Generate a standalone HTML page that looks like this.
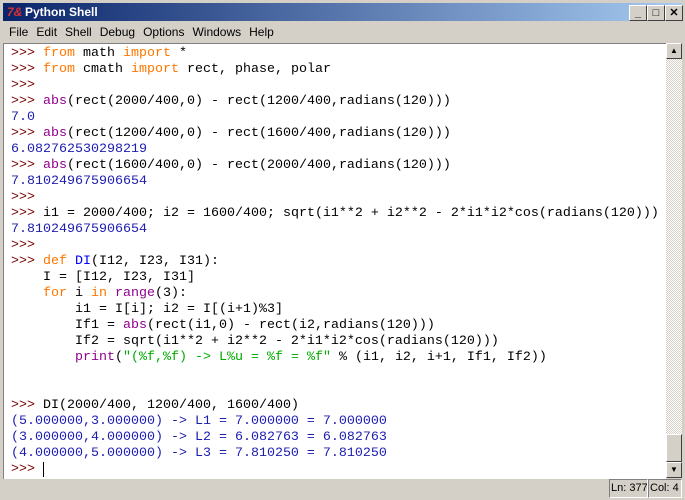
<!DOCTYPE html>
<html><head><style>
body{margin:0;width:685px;height:500px;overflow:hidden;background:#d4d0c8;font-family:"Liberation Sans",sans-serif;position:relative}
.title{position:absolute;left:3px;top:3px;width:679px;height:18px;background:linear-gradient(90deg,#0a246a,#a6caf0);color:#fff;font-weight:bold;font-size:12px;line-height:18px}
.title span.t{position:absolute;left:22px}
.logo{position:absolute;left:4px;top:0;color:#e03030;font-style:italic;font-size:12px}
.btn{position:absolute;top:2px;width:16px;height:14px;background:#d4d0c8;border:1px solid;border-color:#fff #404040 #404040 #fff;color:#000;font-size:11px;line-height:14px;text-align:center}
.menu{position:absolute;left:3px;top:22px;height:20px;font-size:12px;line-height:20px;white-space:nowrap}
.menu span{margin:0 2px 0 6px}
.text{position:absolute;left:3px;top:43px;width:662px;height:435px;background:#fff;border-left:1px solid #808080;border-top:1px solid #808080}
pre{margin:0;position:absolute;left:7px;top:2px;font-family:"Liberation Mono",monospace;font-size:13.33px;line-height:16px;color:#000}
.p{color:#770000}.k{color:#ff7700}.b{color:#900090}.o{color:#1c1cb0}.d{color:#0000ff}.s{color:#00aa00}
.sb{position:absolute;left:666px;top:43px;width:16px;height:435px;background:repeating-conic-gradient(#d4d0c8 0 25%,#fff 0 50%) 0 0/2px 2px}
.sbt{position:absolute;left:666px;width:14px;background:#d4d0c8;border:1px solid;border-color:#fff #404040 #404040 #fff}
.status{position:absolute;top:479px;font-size:11px;line-height:17px;border:1px solid;border-color:#808080 #fff #fff #808080;padding:0 1px;white-space:nowrap;box-sizing:border-box;height:19px;overflow:hidden}
</style></head><body>
<div class="title"><span class="logo">7&amp;</span><span class="t">Python Shell</span>
<div class="btn" style="left:626px">_</div><div class="btn" style="left:644px">□</div><div class="btn" style="left:662px">✕</div></div>
<div class="menu"><span>File</span><span>Edit</span><span>Shell</span><span>Debug</span><span>Options</span><span>Windows</span><span>Help</span></div>
<div class="text"><pre><span class="p">&gt;&gt;&gt; </span><span class="k">from</span> math <span class="k">import</span> *
<span class="p">&gt;&gt;&gt; </span><span class="k">from</span> cmath <span class="k">import</span> rect, phase, polar
<span class="p">&gt;&gt;&gt; </span>
<span class="p">&gt;&gt;&gt; </span><span class="b">abs</span>(rect(2000/400,0) - rect(1200/400,radians(120)))
<span class="o">7.0</span>
<span class="p">&gt;&gt;&gt; </span><span class="b">abs</span>(rect(1200/400,0) - rect(1600/400,radians(120)))
<span class="o">6.082762530298219</span>
<span class="p">&gt;&gt;&gt; </span><span class="b">abs</span>(rect(1600/400,0) - rect(2000/400,radians(120)))
<span class="o">7.810249675906654</span>
<span class="p">&gt;&gt;&gt; </span>
<span class="p">&gt;&gt;&gt; </span>i1 = 2000/400; i2 = 1600/400; sqrt(i1**2 + i2**2 - 2*i1*i2*cos(radians(120)))
<span class="o">7.810249675906654</span>
<span class="p">&gt;&gt;&gt; </span>
<span class="p">&gt;&gt;&gt; </span><span class="k">def</span> <span class="d">DI</span>(I12, I23, I31):
    I = [I12, I23, I31]
    <span class="k">for</span> i <span class="k">in</span> <span class="b">range</span>(3):
        i1 = I[i]; i2 = I[(i+1)%3]
        If1 = <span class="b">abs</span>(rect(i1,0) - rect(i2,radians(120)))
        If2 = sqrt(i1**2 + i2**2 - 2*i1*i2*cos(radians(120)))
        <span class="b">print</span>(<span class="s">"(%f,%f) -&gt; L%u = %f = %f"</span> % (i1, i2, i+1, If1, If2))


<span class="p">&gt;&gt;&gt; </span>DI(2000/400, 1200/400, 1600/400)
<span class="o">(5.000000,3.000000) -&gt; L1 = 7.000000 = 7.000000
(3.000000,4.000000) -&gt; L2 = 6.082763 = 6.082763
(4.000000,5.000000) -&gt; L3 = 7.810250 = 7.810250</span>
<span class="p">&gt;&gt;&gt; </span><span style="border-left:1px solid #000"> </span></pre></div>
<div class="sb"></div>
<div class="sbt" style="top:43px;height:14px;font-size:8px;text-align:center;line-height:14px">▲</div>
<div class="sbt" style="top:434px;height:26px"></div>
<div class="sbt" style="top:462px;height:14px;font-size:8px;text-align:center;line-height:14px">▼</div>
<div class="status" style="left:609px;width:39px">Ln: 377</div>
<div class="status" style="left:648px;width:34px">Col: 4</div>
</body></html>
